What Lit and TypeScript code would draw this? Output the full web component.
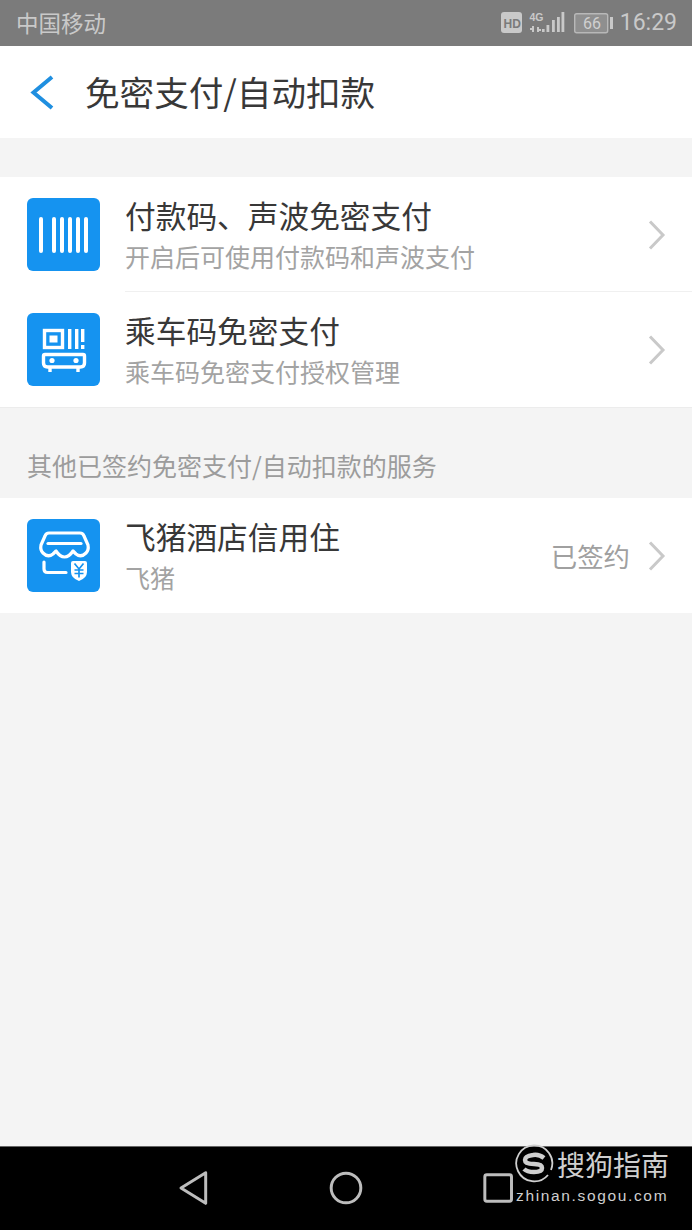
import { customElement } from "lit/decorators.js";
import { css, html, LitElement, svg } from "lit";

const chevron = html`<svg class="chevron" width="20" height="32" viewBox="0 0 20 32">
    <path d="M3 2.5 L16 16 L3 29.5" fill="none" stroke="#c9c9c9" stroke-width="3" />
</svg>`;

const barcodeIcon = svg`
    ${[12, 25, 33, 41, 49, 57].map(
        (x) => svg`<rect x=${x} y="19" width="4" height="36" rx="2" fill="#fff" />`
    )}
`;

const busIcon = svg`
    <g fill="none" stroke="#fff" stroke-width="3.4">
        <rect x="17.5" y="17.5" width="18" height="17" />
        <path d="M18 41.5 H56 Q57.5 41.5 57.5 43 V50 Q57.5 54 53.5 54 H20.5 Q16.5 54 16.5 50 V43 Q16.5 41.5 18 41.5 Z" />
        <path d="M23 54 V59 M51 54 V59" />
    </g>
    <g fill="#fff">
        <rect x="22.5" y="22.5" width="8" height="7" />
        <rect x="41" y="16" width="3.4" height="20" />
        <rect x="48" y="16" width="3.4" height="20" />
        <rect x="54" y="16" width="3.4" height="13" />
        <rect x="54" y="32" width="3.4" height="4" />
        <circle cx="25" cy="47.5" r="2.6" />
        <circle cx="49" cy="47.5" r="2.6" />
    </g>
`;

const shopIcon = svg`
    <g fill="none" stroke="#fff" stroke-width="3.2" stroke-linecap="round" stroke-linejoin="round">
        <path d="M22 14 H53 Q56 14 57 17 L61 26 Q62 31 59 34 Q54 39 49 35 L46 32 Q42 38 37.5 38 Q33 38 29 32 L26 35 Q21 39 16 34 Q13 31 14 26 L18 17 Q19 14 22 14 Z" />
        <path d="M21 24.5 H54" />
        <path d="M17 43 V50 Q17 53.5 20.5 53.5 H39" />
    </g>
    <path d="M46 42 H58 Q60 42 60 44 V53 Q60 59 52 62 Q44 59 44 53 V44 Q44 42 46 42 Z" fill="#fff" />
    <path d="M47.5 44.5 L52 50 L56.5 44.5 M52 50 V58.5 M47.5 51 H56.5 M47.5 54.5 H56.5" fill="none" stroke="#1593f0" stroke-width="1.7" />
`;

@customElement("app-root")
class AppRoot extends LitElement {
    static get styles() {
        return css`
            :host {
                display: flex;
                flex-direction: column;
                position: relative;
                height: 1230px;
                overflow: hidden;
                background: #f4f4f4;
                font-family: "Noto Sans CJK SC", "Liberation Sans", sans-serif;
            }

            .status {
                height: 46px;
                flex: none;
                box-sizing: border-box;
                display: flex;
                align-items: center;
                justify-content: space-between;
                padding: 0 15px 2px 16px;
                background: #7b7b7b;
                color: #c9c9c9;
                font-size: 22.5px;
                line-height: 44px;
            }

            .status-right {
                display: flex;
                align-items: center;
                margin-top: 2px;
            }

            .time {
                margin-left: 7px;
                font-family: Roboto, sans-serif;
                font-size: 23px;
            }

            .nav {
                height: 92px;
                flex: none;
                box-sizing: border-box;
                display: flex;
                align-items: center;
                padding: 0 0 0 29px;
                background: #fff;
            }

            .nav-title {
                margin: -2px 0 0 30px;
                font-size: 34.6px;
                color: #383838;
                white-space: nowrap;
            }

            .list {
                background: #fff;
            }

            .first {
                margin-top: 39px;
                box-shadow: 0 1px #ececec;
            }

            .row {
                height: 115px;
                display: flex;
                align-items: center;
                padding-left: 27px;
                box-sizing: border-box;
            }

            .icon {
                width: 73px;
                height: 73px;
                flex: none;
                display: block;
            }

            .body {
                flex: 1;
                min-width: 0;
                height: 100%;
                margin-left: 25px;
                padding-right: 25px;
                display: flex;
                align-items: center;
            }

            .divided {
                box-shadow: inset 0 -1px #f0f0f0;
            }

            .text {
                flex: 1;
                min-width: 0;
                padding-bottom: 2px;
            }

            .title {
                font-size: 30.7px;
                line-height: 40px;
                color: #383838;
                white-space: nowrap;
            }

            .sub {
                margin-top: 4px;
                font-size: 25px;
                line-height: 34px;
                color: #a3a3a3;
                white-space: nowrap;
            }

            .state {
                margin-right: 17px;
                font-size: 26.4px;
                color: #a0a0a0;
            }

            .chevron {
                flex: none;
                display: block;
            }

            .label {
                height: 91px;
                flex: none;
                box-sizing: border-box;
                padding: 41px 0 0 27px;
                font-size: 25px;
                line-height: 34px;
                color: #9c9c9c;
                white-space: nowrap;
            }

            .spacer {
                flex: 1;
            }

            .softkeys {
                height: 84px;
                flex: none;
                display: block;
                background: #000;
                border-top: 1px solid #666;
                box-sizing: border-box;
            }

            .watermark {
                position: absolute;
                left: 515px;
                top: 1144px;
                width: 160px;
                color: #cfcfcf;
            }

            .wm-top {
                display: flex;
                align-items: center;
            }

            .wm-name {
                margin-left: 2px;
                font-size: 28px;
                line-height: 40px;
                white-space: nowrap;
            }

            .wm-url {
                margin-top: 3px;
                padding-left: 1px;
                font-family: "Liberation Sans", sans-serif;
                font-size: 15.5px;
                line-height: 18px;
                letter-spacing: 1.65px;
                white-space: nowrap;
            }
        `;
    }

    private renderIcon(content: unknown) {
        return html`<svg class="icon" viewBox="0 0 73 73">
            <rect width="73" height="73" rx="6" fill="#1593f0" />
            ${content}
        </svg>`;
    }

    private renderRow(icon: unknown, title: string, sub: string, divided = false, state = "") {
        return html`<div class="row">
            ${this.renderIcon(icon)}
            <div class="body ${divided ? "divided" : ""}">
                <div class="text">
                    <div class="title">${title}</div>
                    <div class="sub">${sub}</div>
                </div>
                ${state ? html`<span class="state">${state}</span>` : ""}
                ${chevron}
            </div>
        </div>`;
    }

    protected render() {
        return html`
            <div class="status">
                <span>中国移动</span>
                <div class="status-right">
                    <svg width="113" height="26" viewBox="0 0 113 26">
                        <rect x="1" y="2" width="21" height="21" rx="3" fill="#c9c9c9" />
                        <text x="3.5" y="17.5" font-family="Liberation Sans" font-size="12" font-weight="700" fill="#7b7b7b">HD</text>
                        <text x="29.5" y="11" font-family="Liberation Sans" font-size="10.5" font-weight="700" fill="#c9c9c9">4G</text>
                        <path d="M33 16 v6 M38 17 v5 M30 19 h3 M38 20 h3" stroke="#c9c9c9" stroke-width="2" />
                        <g fill="#c9c9c9">
                            <rect x="42" y="19" width="2.6" height="3" />
                            <rect x="46.5" y="15" width="2.8" height="7" />
                            <rect x="52" y="10" width="2.8" height="12" />
                            <rect x="57" y="7" width="2.8" height="15" />
                            <rect x="61.5" y="2" width="2.8" height="20" />
                        </g>
                        <rect x="74.7" y="3.7" width="33" height="19" rx="2" fill="#8f8f8f" stroke="#b8b8b8" stroke-width="1.4" />
                        <text x="83" y="19" font-family="Roboto" font-size="16" fill="#d0d0d0">66</text>
                        <rect x="110" y="7" width="3" height="12" fill="#c9c9c9" />
                    </svg>
                    <span class="time">16:29</span>
                </div>
            </div>

            <div class="nav">
                <svg width="26" height="36" viewBox="0 0 26 36">
                    <path d="M23 3 L4.5 18.5 L23 34" fill="none" stroke="#1f8fe0" stroke-width="4" />
                </svg>
                <span class="nav-title">免密支付/自动扣款</span>
            </div>

            <div class="list first">
                ${this.renderRow(barcodeIcon, "付款码、声波免密支付", "开启后可使用付款码和声波支付", true)}
                ${this.renderRow(busIcon, "乘车码免密支付", "乘车码免密支付授权管理")}
            </div>

            <div class="label">其他已签约免密支付/自动扣款的服务</div>

            <div class="list">
                ${this.renderRow(shopIcon, "飞猪酒店信用住", "飞猪", false, "已签约")}
            </div>

            <div class="spacer"></div>

            <svg class="softkeys" viewBox="0 0 692 84">
                <g fill="none" stroke="#bdbdbd" stroke-width="3" stroke-linejoin="round">
                    <path d="M204 26 L179 41.5 L204 57 Z" />
                    <circle cx="346" cy="41.5" r="15" />
                    <rect x="486.5" y="28" width="27" height="27" rx="2" />
                </g>
            </svg>

            <div class="watermark">
                <div class="wm-top">
                    <svg width="40" height="40" viewBox="0 0 40 40">
                        <path d="M33 31 A18 18 0 1 1 36 26" fill="none" stroke="#cfcfcf" stroke-width="1.8" />
                        <path d="M29 14 Q24 10 18 11 Q10 12 10 16 Q10 20 19 20 Q27 20 27 24 Q27 28 19 28 Q12 28 9 25" fill="none" stroke="#cfcfcf" stroke-width="4.5" />
                    </svg>
                    <span class="wm-name">搜狗指南</span>
                </div>
                <div class="wm-url">zhinan.sogou.com</div>
            </div>
        `;
    }
}

export default AppRoot;
